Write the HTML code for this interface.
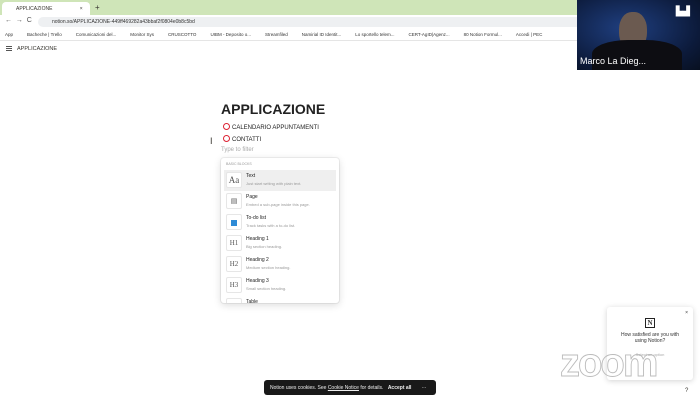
<!DOCTYPE html>
<html><head><meta charset="utf-8"><style>
*{margin:0;padding:0;box-sizing:border-box}
body{width:700px;height:404px;overflow:hidden;background:#fff;font-family:"Liberation Sans",sans-serif;position:relative;color:#37352f}
.abs{position:absolute}
.tabs{left:0;top:0;width:700px;height:15px;background:#cfe5b8}
.tab{left:2px;top:2px;width:88px;height:13px;background:#fff;border-radius:4px 4px 0 0;font-size:5px;padding:4px 0 0 14px}
.addr{left:0;top:15px;width:700px;height:14px;background:#fff}
.url{left:38px;top:17px;width:560px;height:10px;background:#eef0f2;border-radius:5px;font-size:5px;padding:2px 0 0 14px;color:#333}
.bm{left:0;top:29px;width:700px;height:12px;font-size:4.5px;color:#333;white-space:nowrap;padding:3px 0 0 5px;border-bottom:1px solid #e5e5e5}
.bm span{margin-right:14px}
.nav{left:0;top:42px;width:700px;height:14px;font-size:5.5px;padding:4px 0 0 17px}
.video{left:577px;top:0;width:123px;height:70px;background:radial-gradient(ellipse at 40% 40%,#1f3f80,#0c1a3a 70%,#081020);overflow:hidden}
h1{position:absolute;left:221px;top:101px;font-size:14px;font-weight:bold;color:#222}
.item{left:223px;font-size:6px;color:#222}
.item i{display:inline-block;width:7px;height:7px;border:1.6px solid #d23;border-radius:50%;vertical-align:-1px;margin-right:2px}
.menu{left:221px;top:158px;width:118px;height:145px;background:#fff;border-radius:3px;box-shadow:0 0 0 1px rgba(15,15,15,.06),0 2px 8px rgba(15,15,15,.15);overflow:hidden}
.row{position:absolute;left:3px;width:112px;height:21px}
.ic{position:absolute;left:2px;top:2px;width:16px;height:16px;border:1px solid #e6e6e6;border-radius:2px;background:#fff;font-family:"Liberation Serif",serif;color:#555;font-size:7px;text-align:center;line-height:15px}
.t{position:absolute;left:22px;top:3px;font-size:5px;color:#222}
.d{position:absolute;left:22px;top:11px;font-size:4px;color:#999}
.cookie{left:264px;top:380px;width:172px;height:15px;background:#191919;border-radius:3px;color:#eee;font-size:5px;padding:5px 0 0 6px}
.pop{left:607px;top:307px;width:86px;height:73px;background:#fff;box-shadow:0 1px 6px rgba(0,0,0,.18);border-radius:3px;font-size:5px;text-align:center;color:#333}
</style></head><body>
<div class="abs tabs"></div>
<div class="abs tab">APPLICAZIONE <span style="margin-left:26px">×</span></div>
<div class="abs" style="left:95px;top:3px;font-size:8px">+</div>
<div class="abs addr"></div>
<div class="abs" style="left:5px;top:17px;font-size:7px;color:#555">←&nbsp; →&nbsp; C</div>
<div class="abs url">notion.so/APPLICAZIONE-449ff469282a43bbaf2f0804e0b8c5bd</div>
<div class="abs bm"><span>App</span><span>Bacheche | Trello</span><span>Comunicazioni del...</span><span>Monitor Sys</span><span>CRUSCOTTO</span><span>UIBM - Deposito o...</span><span>Streamfiled</span><span>Namirial ID Identit...</span><span>Lo sportello telem...</span><span>CERT-AgID|Agenz...</span><span>80 Notion Formul...</span><span>Accedi | PEC</span></div>
<div class="abs nav">APPLICAZIONE</div>
<div class="abs" style="left:6px;top:46px;width:6px;height:5px;border-top:1px solid #555;border-bottom:1px solid #555"></div>
<div class="abs" style="left:6px;top:48px;width:6px;height:1px;background:#555"></div>
<div class="abs video"><div class="abs" style="left:42px;top:12px;width:28px;height:38px;background:#6b5a50;border-radius:45%"></div><div class="abs" style="left:15px;top:40px;width:90px;height:35px;background:#0d0d12;border-radius:40% 40% 0 0"></div><div class="abs" style="left:3px;top:56px;color:#fff;font-size:9px">Marco La Dieg...</div><div class="abs" style="left:99px;top:6px;color:#fff;font-size:9px;font-weight:bold">▙▟</div></div>
<h1>APPLICAZIONE</h1>
<div class="abs item" style="top:123px"><i></i>CALENDARIO APPUNTAMENTI</div>
<div class="abs item" style="top:135px"><i></i>CONTATTI</div>
<div class="abs" style="left:210px;top:136px;font-size:9px">I</div>
<div class="abs" style="left:221px;top:147px;font-size:6px;color:#aaa">Type to filter</div>
<div class="abs menu">
<div class="abs" style="left:5px;top:4px;font-size:3.5px;color:#999">BASIC BLOCKS</div>
<div class="row" style="top:12px;background:#efefef"><div class="ic" style="font-size:9px">Aa</div><div class="t">Text</div><div class="d">Just start writing with plain text.</div></div>
<div class="row" style="top:33px"><div class="ic">▤</div><div class="t">Page</div><div class="d">Embed a sub-page inside this page.</div></div>
<div class="row" style="top:54px"><div class="ic"><span style="display:inline-block;width:6px;height:6px;background:#2e8bd6;margin-top:5px"></span></div><div class="t">To-do list</div><div class="d">Track tasks with a to-do list.</div></div>
<div class="row" style="top:75px"><div class="ic">H1</div><div class="t">Heading 1</div><div class="d">Big section heading.</div></div>
<div class="row" style="top:96px"><div class="ic">H2</div><div class="t">Heading 2</div><div class="d">Medium section heading.</div></div>
<div class="row" style="top:117px"><div class="ic">H3</div><div class="t">Heading 3</div><div class="d">Small section heading.</div></div>
<div class="row" style="top:138px"><div class="ic"></div><div class="t">Table</div></div>
</div>
<div class="abs pop"><div style="position:absolute;right:5px;top:3px;font-size:5px">×</div><div style="margin:11px auto 0;width:10px;height:10px;border:1.2px solid #222;font-size:7px;line-height:8px;font-weight:bold;font-family:'Liberation Serif',serif">N</div><div style="margin-top:4px">How satisfied are you with<br>using Notion?</div><div style="margin-top:8px;color:#aaa;font-size:4px">Select an option</div></div>
<div class="abs" style="left:560px;top:341px;font-size:40px;font-weight:bold;color:transparent;-webkit-text-stroke:0.9px #bbb;letter-spacing:-2px">zoom</div>
<div class="abs" style="left:685px;top:388px;font-size:6px">?</div>
<div class="abs cookie">Notion uses cookies. See <u>Cookie Notice</u> for details. <b style="margin-left:3px">Accept all</b><span style="margin-left:10px">···</span></div>
</body></html>
